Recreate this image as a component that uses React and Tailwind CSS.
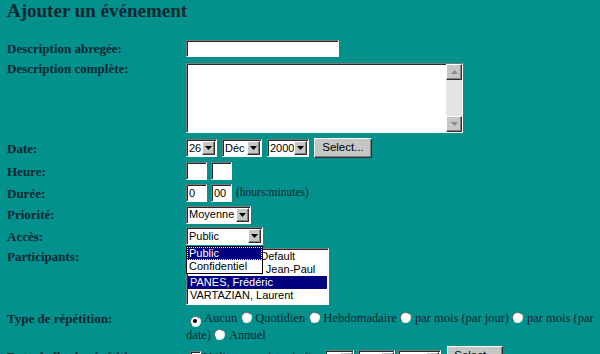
import React from "react";

const serif = "font-['Liberation_Serif',serif]";
const sans = "font-['Liberation_Sans',Arial,sans-serif]";
const ink = "text-[#0b2630]";
const inset =
  "border border-t-[#7a7a7a] border-l-[#7a7a7a] border-b-white border-r-white shadow-[inset_1px_1px_0_#2a2a2a]";
const outset =
  "border border-t-white border-l-white border-b-[#303030] border-r-[#303030] shadow-[inset_-1px_-1px_0_#808080]";

function Label({ children, className = "" }) {
  return (
    <div
      className={`w-[186px] shrink-0 pl-[7px] text-[13px] leading-[15px] font-bold ${serif} ${ink} ${className}`}
    >
      {children}
    </div>
  );
}

function Arrow() {
  return (
    <div className={`shrink-0 w-[13px] h-[14px] bg-[#c6c6c6] ${outset} flex items-center justify-center`}>
      <svg width="7" height="4" viewBox="0 0 7 4">
        <path d="M0 0h7L3.5 4z" fill="#000" />
      </svg>
    </div>
  );
}

function Select({ value, w }) {
  return (
    <div className={`flex items-center h-[18px] bg-white ${inset} ${w}`}>
      <span className={`flex-1 pl-[2px] text-[11px] leading-none text-black whitespace-nowrap ${sans}`}>
        {value}
      </span>
      <div className="pr-[1px] shrink-0">
        <Arrow />
      </div>
    </div>
  );
}

function Button({ children, w }) {
  return (
    <div
      className={`h-[20px] ${w} bg-[#c6c6c6] ${outset} flex items-center justify-center text-[11.5px] text-black ${sans}`}
    >
      {children}
    </div>
  );
}

function TextBox({ w, h = "h-[18px]", value = "" }) {
  return (
    <div className={`${w} ${h} bg-white ${inset} flex items-center pl-[2px] text-[11px] text-black ${sans}`}>
      {value}
    </div>
  );
}

function Radio({ checked }) {
  return (
    <span className="inline-flex align-[-1px] w-[11px] h-[11px] rounded-full bg-white border border-t-[#6a6a6a] border-l-[#6a6a6a] border-b-[#e8e8e8] border-r-[#e8e8e8] items-center justify-center mx-[3.5px]">
      {checked && <span className="w-[4px] h-[4px] rounded-full bg-black" />}
    </span>
  );
}

function Tri({ up }) {
  return (
    <svg width="7" height="4" viewBox="0 0 7 4">
      <path d={up ? "M0 4h7L3.5 0z" : "M0 0h7L3.5 4z"} fill="#8a8a8a" />
    </svg>
  );
}

export default function App() {
  return (
    <div className={`w-[600px] h-[354px] overflow-hidden bg-[#03918e] ${serif}`}>
      <h1 className={`pl-[7px] text-[19px] leading-[22px] font-bold ${ink}`}>Ajouter un événement</h1>

      {/* Description abrégée */}
      <div className="flex items-center mt-[18px] h-[17px]">
        <Label>Description abregée:</Label>
        <TextBox w="w-[153px]" h="h-[17px]" />
      </div>

      {/* Description complète */}
      <div className="flex items-start mt-[6px]">
        <Label className="-mt-[2px]">Description complète:</Label>
        <div className={`w-[277px] h-[70px] bg-white ${inset} flex justify-end`}>
          <div className="w-[16px] h-full bg-[#e4e4e4] flex flex-col justify-between">
            <div className={`w-[16px] h-[16px] bg-[#c6c6c6] ${outset} flex items-center justify-center`}>
              <Tri up />
            </div>
            <div className={`w-[16px] h-[16px] bg-[#c6c6c6] ${outset} flex items-center justify-center`}>
              <Tri />
            </div>
          </div>
        </div>
      </div>

      {/* Date */}
      <div className="flex items-center mt-[5px] h-[20px]">
        <Label>Date:</Label>
        <div className="flex items-center gap-[5px]">
          <Select value="26" w="w-[31px]" />
          <Select value="Déc" w="w-[40px]" />
          <Select value="2000" w="w-[42px]" />
          <Button w="w-[58px]">Select...</Button>
        </div>
      </div>

      {/* Heure */}
      <div className="flex items-center mt-[4px] h-[18px]">
        <Label>Heure:</Label>
        <div className="flex gap-[4px]">
          <TextBox w="w-[21px]" />
          <TextBox w="w-[21px]" />
        </div>
      </div>

      {/* Durée */}
      <div className="flex items-center mt-[4px] h-[18px]">
        <Label>Durée:</Label>
        <div className="flex items-center gap-[4px]">
          <TextBox w="w-[21px]" value="0" />
          <TextBox w="w-[21px]" value="00" />
          <span className={`text-[11.5px] ${ink}`}>(hours:minutes)</span>
        </div>
      </div>

      {/* Priorité */}
      <div className="flex items-center mt-[4px] h-[17px]">
        <Label>Priorité:</Label>
        <Select value="Moyenne" w="w-[65px]" />
      </div>

      {/* Accès */}
      <div className="flex items-center mt-[4px] h-[18px]">
        <Label>Accès:</Label>
        <div className="relative">
          <Select value="Public" w="w-[77px]" />
          <div className={`absolute left-0 top-[19px] w-[77px] z-10 bg-white border border-black ${sans} text-[11px]`}>
            <div className="h-[13px] leading-[11px] bg-[#000080] text-white pl-[1px] border border-dotted border-[#ffff99]">
              Public
            </div>
            <div className="h-[13px] leading-[13px] text-black pl-[2px]">Confidentiel</div>
          </div>
        </div>
      </div>

      {/* Participants */}
      <div className="flex items-start mt-[3px]">
        <Label className="mt-[1px]">Participants:</Label>
        <div className={`w-[143px] h-[57px] bg-white ${inset} p-[1px] ${sans} text-[11px] leading-[13px] text-black overflow-hidden`}>
          <div className="pl-[2px] whitespace-nowrap">Administrator,  Default</div>
          <div className="pl-[2px] whitespace-nowrap">BONNAFOUS, Jean-Paul</div>
          <div className="pl-[2px] whitespace-nowrap bg-[#000080] text-white">PANES, Frédéric</div>
          <div className="pl-[2px] whitespace-nowrap">VARTAZIAN, Laurent</div>
        </div>
      </div>

      {/* Type de répétition */}
      <div className="flex items-start mt-[5px]">
        <Label className="mt-[1px]">Type de répétition:</Label>
        <div className={`text-[12.5px] leading-[17px] whitespace-nowrap ${ink}`}>
          <Radio checked />Aucun<Radio />Quotidien<Radio />Hebdomadaire<Radio />par mois (par jour)<Radio />par mois (par
          <br />
          date)<Radio />Annuel
        </div>
      </div>

      {/* Date de fin */}
      <div className="flex items-start mt-[2px]">
        <Label className="mt-[3px]">Date de fin de répétition:</Label>
        <div className="flex items-start">
          <span className={`mt-[5px] ml-[4px] w-[11px] h-[11px] bg-white ${inset}`} />
          <span className={`mt-[2px] ml-[1px] w-[123px] pl-[1px] text-[12.5px] ${ink}`}>Utiliser une date de fin</span>
          <div className="flex items-start mt-[4px]">
            <Select value="27" w="w-[29px]" />
            <div className="ml-[4px]">
              <Select value="Déc" w="w-[37px]" />
            </div>
            <div className="ml-[3px]">
              <Select value="2000" w="w-[43px]" />
            </div>
          </div>
          <div className="ml-[6px]">
            <Button w="w-[56px]">Select...</Button>
          </div>
        </div>
      </div>
    </div>
  );
}
